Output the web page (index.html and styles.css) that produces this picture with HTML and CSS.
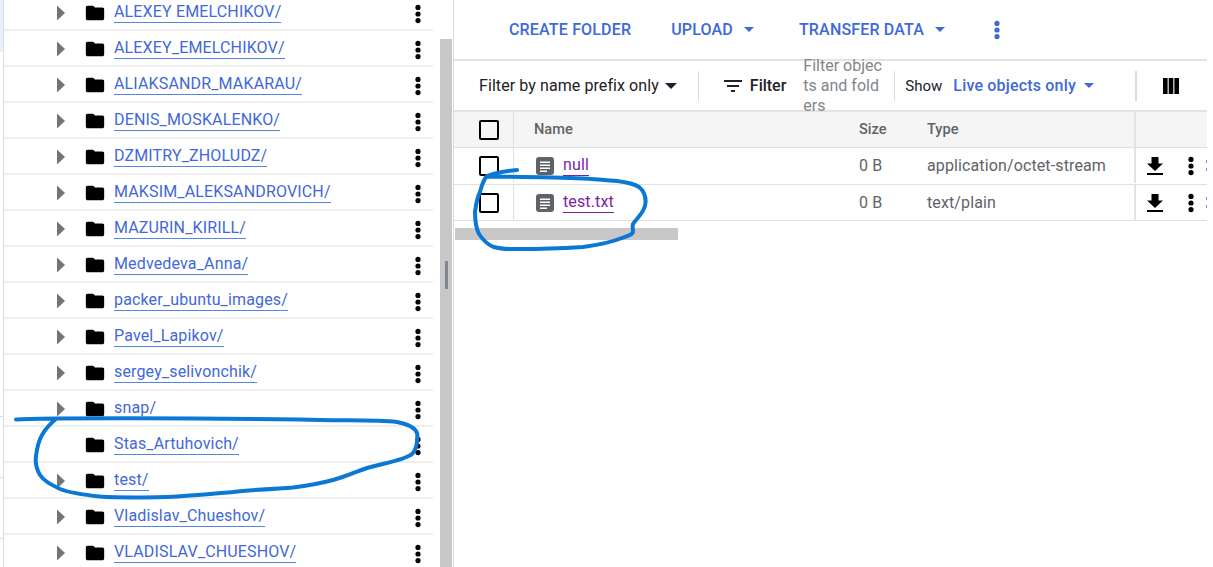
FILE: index.html
```html
<!DOCTYPE html>
<html lang="en">
<head>
    <meta charset="UTF-8">
    <meta name="viewport" content="width=device-width, initial-scale=1.0">
    <title>Bucket details</title>
    <link rel="stylesheet" href="styles.css">
</head>
<body>
    <svg class="defs" width="0" height="0">
        <symbol id="i-arrow" viewBox="0 0 8 15"><path d="M0 0l8 7.5L0 15z"/></symbol>
        <symbol id="i-folder" viewBox="0 0 24 24"><path d="M10 4H4c-1.1 0-1.99.9-1.99 2L2 18c0 1.1.9 2 2 2h16c1.1 0 2-.9 2-2V8c0-1.1-.9-2-2-2h-8l-2-2z"/></symbol>
        <symbol id="i-more" viewBox="0 0 6 20"><circle cx="3" cy="3.4" r="2.6"/><circle cx="3" cy="10" r="2.6"/><circle cx="3" cy="16.6" r="2.6"/></symbol>
        <symbol id="i-file" viewBox="0 0 18 18"><rect width="18" height="18" rx="3"/><path fill="#fff" d="M4 4.5h10V6H4zM4 7.5h10V9H4zM4 10.5h10V12H4zM4 13.5h7V15H4z"/></symbol>
        <symbol id="i-download" viewBox="0 0 16 18"><path d="M11.5 0h-7v6.5H0L8 14l8-7.500h-4.500zM0 16h16v2H0z"/></symbol>
    </svg>

    <div class="app">
        <div class="strip">
            <div class="strip-active"></div>
            <div class="strip-tick tick-1"></div>
            <div class="strip-tick tick-2"></div>
            <div class="strip-tick tick-3"></div>
        </div>

        <div class="tree-panel">
            <div class="tree-list">
                <div class="tree-row"><svg class="arrow"><use href="#i-arrow"/></svg><svg class="folder"><use href="#i-folder"/></svg><a class="tree-link">ALEXEY EMELCHIKOV/</a><svg class="more"><use href="#i-more"/></svg></div>
                <div class="tree-row"><svg class="arrow"><use href="#i-arrow"/></svg><svg class="folder"><use href="#i-folder"/></svg><a class="tree-link">ALEXEY_EMELCHIKOV/</a><svg class="more"><use href="#i-more"/></svg></div>
                <div class="tree-row"><svg class="arrow"><use href="#i-arrow"/></svg><svg class="folder"><use href="#i-folder"/></svg><a class="tree-link">ALIAKSANDR_MAKARAU/</a><svg class="more"><use href="#i-more"/></svg></div>
                <div class="tree-row"><svg class="arrow"><use href="#i-arrow"/></svg><svg class="folder"><use href="#i-folder"/></svg><a class="tree-link">DENIS_MOSKALENKO/</a><svg class="more"><use href="#i-more"/></svg></div>
                <div class="tree-row"><svg class="arrow"><use href="#i-arrow"/></svg><svg class="folder"><use href="#i-folder"/></svg><a class="tree-link">DZMITRY_ZHOLUDZ/</a><svg class="more"><use href="#i-more"/></svg></div>
                <div class="tree-row"><svg class="arrow"><use href="#i-arrow"/></svg><svg class="folder"><use href="#i-folder"/></svg><a class="tree-link">MAKSIM_ALEKSANDROVICH/</a><svg class="more"><use href="#i-more"/></svg></div>
                <div class="tree-row"><svg class="arrow"><use href="#i-arrow"/></svg><svg class="folder"><use href="#i-folder"/></svg><a class="tree-link">MAZURIN_KIRILL/</a><svg class="more"><use href="#i-more"/></svg></div>
                <div class="tree-row"><svg class="arrow"><use href="#i-arrow"/></svg><svg class="folder"><use href="#i-folder"/></svg><a class="tree-link">Medvedeva_Anna/</a><svg class="more"><use href="#i-more"/></svg></div>
                <div class="tree-row"><svg class="arrow"><use href="#i-arrow"/></svg><svg class="folder"><use href="#i-folder"/></svg><a class="tree-link">packer_ubuntu_images/</a><svg class="more"><use href="#i-more"/></svg></div>
                <div class="tree-row"><svg class="arrow"><use href="#i-arrow"/></svg><svg class="folder"><use href="#i-folder"/></svg><a class="tree-link">Pavel_Lapikov/</a><svg class="more"><use href="#i-more"/></svg></div>
                <div class="tree-row"><svg class="arrow"><use href="#i-arrow"/></svg><svg class="folder"><use href="#i-folder"/></svg><a class="tree-link">sergey_selivonchik/</a><svg class="more"><use href="#i-more"/></svg></div>
                <div class="tree-row"><svg class="arrow"><use href="#i-arrow"/></svg><svg class="folder"><use href="#i-folder"/></svg><a class="tree-link">snap/</a><svg class="more"><use href="#i-more"/></svg></div>
                <div class="tree-row"><span class="arrow"></span><svg class="folder"><use href="#i-folder"/></svg><a class="tree-link">Stas_Artuhovich/</a><svg class="more"><use href="#i-more"/></svg></div>
                <div class="tree-row"><svg class="arrow"><use href="#i-arrow"/></svg><svg class="folder"><use href="#i-folder"/></svg><a class="tree-link">test/</a><svg class="more"><use href="#i-more"/></svg></div>
                <div class="tree-row"><svg class="arrow"><use href="#i-arrow"/></svg><svg class="folder"><use href="#i-folder"/></svg><a class="tree-link">Vladislav_Chueshov/</a><svg class="more"><use href="#i-more"/></svg></div>
                <div class="tree-row"><svg class="arrow"><use href="#i-arrow"/></svg><svg class="folder"><use href="#i-folder"/></svg><a class="tree-link">VLADISLAV_CHUESHOV/</a><svg class="more"><use href="#i-more"/></svg></div>
            </div>
            <div class="tree-scroll">
                <div class="resize-handle"></div>
            </div>
        </div>

        <div class="main">
            <div class="toolbar">
                <button class="tool-btn btn-create">CREATE FOLDER</button>
                <button class="tool-btn btn-upload">UPLOAD<span class="caret"></span></button>
                <button class="tool-btn btn-transfer">TRANSFER DATA<span class="caret"></span></button>
                <svg class="tool-more"><use href="#i-more"/></svg>
            </div>

            <div class="filter-bar">
                <div class="prefix-select">Filter by name prefix only<span class="caret caret-dark"></span></div>
                <div class="bar-sep"></div>
                <div class="filter-btn">
                    <svg class="filter-icon" viewBox="0 0 18 12"><path d="M0 0h18v2H0zM3 5h12v2H3zM7 10h4v2H7z"/></svg>
                    <span>Filter</span>
                </div>
                <div class="filter-input">Filter objects and folders</div>
                <div class="bar-sep sep-show"></div>
                <div class="show-select">
                    <span class="show-label">Show</span>
                    <span class="show-value">Live objects only</span>
                    <span class="caret"></span>
                </div>
                <div class="bar-sep sep-columns"></div>
                <svg class="columns-icon" viewBox="0 0 16 16"><path d="M0 0h4.600v16H0zM5.700 0h4.600v16H5.700zM11.400 0H16v16h-4.600z"/></svg>
            </div>

            <div class="table">
                <div class="table-row table-head">
                    <div class="cell cell-check"><span class="checkbox"></span></div>
                    <div class="cell cell-name">Name</div>
                    <div class="cell cell-size">Size</div>
                    <div class="cell cell-type">Type</div>
                    <div class="cell cell-actions"></div>
                </div>
                <div class="table-row row-first">
                    <div class="cell cell-check"><span class="checkbox"></span></div>
                    <div class="cell cell-name"><svg class="file-icon"><use href="#i-file"/></svg><a class="file-link">null</a></div>
                    <div class="cell cell-size">0 B</div>
                    <div class="cell cell-type">application/octet-stream</div>
                    <div class="cell cell-actions"><svg class="download"><use href="#i-download"/></svg><svg class="more row-more"><use href="#i-more"/></svg><span class="cut-icon"></span></div>
                </div>
                <div class="table-row">
                    <div class="cell cell-check"><span class="checkbox"></span></div>
                    <div class="cell cell-name"><svg class="file-icon"><use href="#i-file"/></svg><a class="file-link">test.txt</a></div>
                    <div class="cell cell-size">0 B</div>
                    <div class="cell cell-type">text/plain</div>
                    <div class="cell cell-actions"><svg class="download"><use href="#i-download"/></svg><svg class="more row-more"><use href="#i-more"/></svg><span class="cut-icon"></span></div>
                </div>
            </div>
            <div class="table-scroll"></div>
        </div>

        <div class="edge"></div>
    </div>

    <!-- hand drawn marks on top of the screenshot -->
    <svg class="marks" viewBox="0 0 1213 567">
        <path d="M16 419.500 C 30 419, 45 418.500, 57 418.500 C 140 418, 230 418.500, 300 419.500 C 340 421, 375 419.500, 397 422 C 408 424, 415 428, 417 433 C 418 438, 417 449, 412 454 C 405 460, 385 463, 367 468 C 355 472, 345 477, 333 480 C 318 484, 305 486, 293 487.500 C 270 489, 250 490, 233 492 C 210 494, 190 496, 167 497 C 145 497.500, 120 498, 100 496.500 C 85 495, 70 493, 60 489 C 50 484, 44 481, 40 475 C 36 468, 35 463, 36 456 C 37 448, 38 442, 42 435 C 46 428, 51 423, 56 419"/>
        <path d="M517 170 C 507 171, 495 173, 487 176 C 483 180, 482 185, 480 192 C 477 198, 476 204, 475 212 C 475 222, 476 228, 479 234 C 483 240, 488 245, 494 247 C 503 250, 512 249, 523 249 C 545 249, 565 248, 583 247 C 598 245, 612 242, 622 238 C 628 236, 632 235, 633 232 C 633 228, 632 227, 633 224 C 637 218, 645 212, 645.500 203 C 646 196, 644 191, 639 187 C 633 183, 625 182, 617 181 C 605 180, 595 179, 583 178.500 C 550 177, 520 177, 487 176.500"/>
    </svg>
</body>
</html>
```

FILE: styles.css
```css
* {
    box-sizing: border-box;
}
html, body {
    margin: 0;
    padding: 0;
    height: 100%;
    overflow: hidden;
    background-color: #fff;
}
body {
    font-family: Roboto, "Liberation Sans", sans-serif;
    font-size: 16px;
    color: #202124;
}
.defs {
    position: absolute;
}
.app {
    display: flex;
    width: 1213px;
    height: 567px;
    overflow: hidden;
}

/* left edge of the page behind the tree */
.strip {
    position: relative;
    flex: 0 0 3px;
}
.strip-active {
    height: 52px;
    background-color: #e8f0fe;
}
.strip-tick {
    position: absolute;
    left: 0;
    width: 3px;
    height: 1px;
    background-color: #ddd;
}
.tick-1 { top: 416px; }
.tick-2 { top: 477px; }
.tick-3 { top: 538px; }

/* folder tree */
.tree-panel {
    flex: 0 0 451px;
    display: flex;
    border-left: 1px solid #dadce0;
    border-right: 1px solid #dadce0;
}
.tree-list {
    flex: 0 0 429px;
    margin-top: -5px;
}
.tree-row {
    display: flex;
    align-items: center;
    height: 36px;
    border-bottom: 2px solid #eeeeee;
    padding-top: 2px;
}
.arrow {
    flex: none;
    width: 8px;
    height: 15px;
    margin-left: 53px;
    margin-right: 19px;
    fill: #757575;
    transform: translateY(-0.5px);
}
.folder {
    flex: none;
    width: 22px;
    height: 22px;
    margin-right: 8px;
    fill: #000;
}
.tree-link {
    color: #3f68d9;
    border-bottom: 1px solid #5484e8;
    line-height: 18px;
    padding-bottom: 1px;
    letter-spacing: 0.15px;
}
.more {
    flex: none;
    width: 6px;
    height: 20px;
    fill: #000;
}
.tree-row .more {
    margin-left: auto;
    margin-right: 12px;
    transform: translateY(1px);
}
.tree-scroll {
    position: relative;
    flex: 0 0 12px;
    margin-left: 7px;
    margin-top: 39px;
    background-color: #c8c8c8;
}
.resize-handle {
    position: absolute;
    left: 5px;
    top: 222px;
    width: 3px;
    height: 28px;
    background-color: #7f868f;
}

/* right side */
.main {
    flex: 0 0 753px;
    min-width: 0;
}
.toolbar {
    display: flex;
    align-items: center;
    height: 61px;
    border-bottom: 2px solid #e3e3e3;
    padding-left: 55px;
}
.tool-btn {
    display: flex;
    align-items: center;
    padding: 0;
    border: none;
    background: none;
    font-family: inherit;
    font-size: 16px;
    font-weight: 500;
    letter-spacing: 0.17px;
    color: #3f68d9;
}
.btn-create {
    margin-right: 40px;
}
.btn-upload {
    margin-right: 45px;
}
.caret {
    display: inline-block;
    width: 0;
    height: 0;
    margin-left: 11px;
    border-left: 5px solid transparent;
    border-right: 5px solid transparent;
    border-top: 5px solid #3f68d9;
}
.caret-dark {
    margin-left: 6px;
    border-left-width: 6px;
    border-right-width: 6px;
    border-top: 6px solid #202124;
}
.tool-more {
    width: 6px;
    height: 20px;
    margin-left: 49px;
    fill: #3f68d9;
}
.filter-bar {
    display: flex;
    align-items: center;
    height: 51px;
    border-bottom: 2px solid #e3e3e3;
    padding-left: 25px;
}
.prefix-select {
    display: flex;
    align-items: center;
    letter-spacing: 0.08px;
    color: #202124;
}
.bar-sep {
    flex: none;
    width: 1px;
    height: 30px;
    background-color: #dadce0;
    margin-left: 21px;
}
.filter-btn {
    display: flex;
    align-items: center;
    margin-left: 25px;
    font-weight: 500;
    color: #202124;
}
.filter-icon {
    width: 18px;
    height: 12px;
    margin-right: 8px;
    fill: #202124;
}
.filter-input {
    width: 82px;
    margin-left: 17px;
    line-height: 20px;
    color: #80868b;
    word-break: break-all;
}
.sep-show {
    margin-left: 9px;
}
.show-select {
    display: flex;
    align-items: center;
    margin-left: 10px;
}
.show-select .caret {
    margin-left: 8px;
}
.show-label {
    font-size: 15px;
    color: #202124;
}
.show-value {
    margin-left: 11px;
    font-weight: 500;
    letter-spacing: 0.18px;
    color: #3f68d9;
}
.sep-columns {
    margin-left: 41px;
    width: 2px;
}
.columns-icon {
    flex: none;
    width: 16px;
    height: 16px;
    margin-left: 26px;
    fill: #000;
}
.table-row {
    display: flex;
    height: 36px;
    border-bottom: 1px solid #dfdfdf;
    font-size: 16px;
    letter-spacing: 0.12px;
    color: #5f6368;
}
.row-first {
    height: 37px;
    padding-bottom: 1px;
}
.table-head {
    background-color: #f5f5f5;
    font-weight: 500;
    font-size: 14.6px;
    letter-spacing: 0;
    color: #5f6368;
}
.table-head .cell-name, .table-head .cell-size, .table-head .cell-type {
    padding-bottom: 2px;
}
.cell {
    display: flex;
    align-items: center;
}
.cell-check {
    flex: 0 0 60px;
    justify-content: center;
    border-right: 1px solid #e0e0e0;
    padding-left: 11px;
}
.checkbox {
    width: 20px;
    height: 20px;
    border: 2px solid #000;
    border-radius: 2px;
}
.cell-name {
    flex: 0 0 345px;
    padding-left: 20px;
}
.cell-size {
    flex: 0 0 68px;
}
.cell-type {
    flex: 0 0 207px;
}
.cell-actions {
    flex: 0 0 73px;
    border-left: 2px solid #e3e3e3;
    overflow: hidden;
}
.file-icon {
    margin-left: 2px;
    width: 18px;
    height: 18px;
    margin-right: 9px;
    fill: #5f6368;
}
.file-link {
    color: #7b1fa2;
    border-bottom: 1px solid #7b1fa2;
    line-height: 20px;
}
.download {
    flex: none;
    width: 16px;
    height: 18px;
    margin-left: 11px;
    fill: #000;
}
.row-more {
    margin-left: 25px;
}
.cut-icon {
    flex: none;
    width: 1px;
    height: 12px;
    margin-left: 12px;
    background: repeating-linear-gradient(#5f9ae8 0, #5f9ae8 3px, #fff 3px, #fff 8px);
}
.table-scroll {
    width: 223px;
    height: 12px;
    margin-top: 7px;
    margin-left: 1px;
    background-color: #c8c8c8;
}
.edge {
    position: absolute;
    left: 1207px;
    top: 0;
    width: 6px;
    height: 567px;
    background-color: #fff;
}

/* marker strokes over the screenshot */
.marks {
    position: absolute;
    left: 0;
    top: 0;
    width: 1213px;
    height: 567px;
    fill: none;
    stroke: #0a78d4;
    stroke-width: 4;
    stroke-linecap: round;
    pointer-events: none;
}
```
